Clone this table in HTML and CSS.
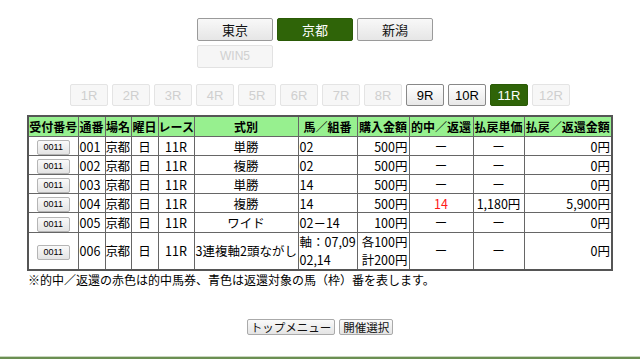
FILE: index.html
```html
<!DOCTYPE html>
<html lang="ja">
<head>
<meta charset="utf-8">
<link rel="stylesheet" href="styles.css">
</head>
<body>
<div class="page">
  <div class="venues">
    <button class="vbtn">東京</button>
    <button class="vbtn active">京都</button>
    <button class="vbtn">新潟</button>
    <button class="vbtn disabled">WIN5</button>
  </div>
  <div class="races">
    <button class="rbtn disabled">1R</button>
    <button class="rbtn disabled">2R</button>
    <button class="rbtn disabled">3R</button>
    <button class="rbtn disabled">4R</button>
    <button class="rbtn disabled">5R</button>
    <button class="rbtn disabled">6R</button>
    <button class="rbtn disabled">7R</button>
    <button class="rbtn disabled">8R</button>
    <button class="rbtn">9R</button>
    <button class="rbtn">10R</button>
    <button class="rbtn active">11R</button>
    <button class="rbtn disabled">12R</button>
  </div>
  <table class="result">
    <colgroup>
      <col class="c1"><col class="c2"><col class="c3"><col class="c4"><col class="c5"><col class="c6"><col class="c7"><col class="c8"><col class="c9"><col class="c10"><col class="c11">
    </colgroup>
    <thead>
      <tr>
        <th>受付番号</th><th>通番</th><th>場名</th><th>曜日</th><th>レース</th><th>式別</th><th>馬／組番</th><th>購入金額</th><th>的中／返還</th><th>払戻単価</th><th>払戻／返還金額</th>
      </tr>
    </thead>
    <tbody>
      <tr>
        <td class="ctr"><span class="rcpt">0011</span></td><td>001</td><td>京都</td><td class="ctr">日</td><td class="ctr">11R</td><td class="ctr">単勝</td><td>02</td><td class="rt">500円</td><td class="ctr">ー</td><td class="ctr">ー</td><td class="rt">0円</td>
      </tr>
      <tr>
        <td class="ctr"><span class="rcpt">0011</span></td><td>002</td><td>京都</td><td class="ctr">日</td><td class="ctr">11R</td><td class="ctr">複勝</td><td>02</td><td class="rt">500円</td><td class="ctr">ー</td><td class="ctr">ー</td><td class="rt">0円</td>
      </tr>
      <tr>
        <td class="ctr"><span class="rcpt">0011</span></td><td>003</td><td>京都</td><td class="ctr">日</td><td class="ctr">11R</td><td class="ctr">単勝</td><td>14</td><td class="rt">500円</td><td class="ctr">ー</td><td class="ctr">ー</td><td class="rt">0円</td>
      </tr>
      <tr>
        <td class="ctr"><span class="rcpt">0011</span></td><td>004</td><td>京都</td><td class="ctr">日</td><td class="ctr">11R</td><td class="ctr">複勝</td><td>14</td><td class="rt">500円</td><td class="ctr hit">14</td><td class="ctr">1,180円</td><td class="rt">5,900円</td>
      </tr>
      <tr>
        <td class="ctr"><span class="rcpt">0011</span></td><td>005</td><td>京都</td><td class="ctr">日</td><td class="ctr">11R</td><td class="ctr">ワイド</td><td>02－14</td><td class="rt">100円</td><td class="ctr">ー</td><td class="ctr">ー</td><td class="rt">0円</td>
      </tr>
      <tr class="tall">
        <td class="ctr"><span class="rcpt">0011</span></td><td>006</td><td>京都</td><td class="ctr">日</td><td class="ctr">11R</td><td class="ctr">3連複軸2頭ながし</td><td>軸：07,09<br>02,14</td><td class="rt">各100円<br>計200円</td><td class="ctr">ー</td><td class="ctr">ー</td><td class="rt">0円</td>
      </tr>
    </tbody>
  </table>
  <p class="note">※的中／返還の赤色は的中馬券、青色は返還対象の馬（枠）番を表します。</p>
  <div class="bottom">
    <button class="bbtn">トップメニュー</button>
    <button class="bbtn">開催選択</button>
  </div>
</div>
<div class="footer-line"></div>
</body>
</html>
```
FILE: styles.css
```css
html, body {
  margin: 0;
  padding: 0;
  background: #ffffff;
}
body {
  font-family: "Noto Sans CJK JP", "Noto Sans", sans-serif;
  color: #000;
  font-size: 12px;
  width: 640px;
  height: 360px;
  overflow: hidden;
  position: relative;
}
.page {
  padding-top: 18px;
}
button {
  font-family: "Noto Sans CJK JP", "Noto Sans", sans-serif;
  margin: 0;
  cursor: pointer;
}
.venues {
  width: 246px;
  margin: 0 auto;
  display: flex;
  flex-wrap: wrap;
  gap: 4px 4px;
}
.vbtn {
  width: 76px;
  height: 23px;
  padding: 0;
  font-size: 13px;
  line-height: 21px;
  border: 1px solid #9a9a9a;
  border-radius: 2px;
  background: linear-gradient(#f8f8f8, #e6e6e6);
  color: #111;
}
.vbtn.active {
  background: #2f6408;
  border-color: #2a5a06;
  color: #ffffff;
}
.vbtn.disabled {
  background: #f6f6f6;
  border-color: #e2e2e2;
  color: #d0d0d0;
  font-family: "Liberation Sans", Arial, sans-serif;
  font-size: 12px;
}
.races {
  margin: 16px auto 0;
  display: flex;
  justify-content: center;
  gap: 4px;
}
.rbtn {
  width: 38px;
  height: 22px;
  padding: 0;
  font-family: "Liberation Sans", Arial, sans-serif;
  font-size: 13px;
  border: 1px solid #888;
  border-radius: 2px;
  background: linear-gradient(#ffffff, #e8e8e8);
  color: #000;
}
.rbtn.disabled {
  background: #f7f7f7;
  border-color: #e4e4e4;
  color: #cfcfcf;
}
.rbtn.active {
  background: #2f6408;
  border-color: #2a5a06;
  color: #fff;
}
.result {
  margin: 9px auto 0;
  border-collapse: collapse;
  border: 2px solid #555;
  table-layout: fixed;
  width: 584px;
}
.c1 { width: 50px; }
.c2 { width: 27px; }
.c3 { width: 26px; }
.c4 { width: 27px; }
.c5 { width: 36px; }
.c6 { width: 104px; }
.c7 { width: 59px; }
.c8 { width: 52px; }
.c9 { width: 64px; }
.c10 { width: 51px; }
.c11 { width: 88px; }
.result th {
  background: #97f08f;
  font-weight: bold;
  font-size: 12px;
  height: 19px;
  padding: 0;
  line-height: 18px;
  border: 1px solid #666;
  white-space: nowrap;
  overflow: hidden;
}
.result td {
  border: 1px solid #666;
  height: 18px;
  padding: 0 1px;
  line-height: 17px;
  font-size: 12.5px;
  white-space: nowrap;
  overflow: hidden;
}
.result td:nth-child(3) {
  padding: 0;
  letter-spacing: -0.5px;
}
.result tr.tall td {
  height: 36px;
  line-height: 18px;
}
.result td.ctr { text-align: center; }
.result td.rt { text-align: right; }
.result td.hit { color: #ff1a1a; }
.rcpt {
  display: inline-block;
  width: 31px;
  height: 13px;
  line-height: 13px;
  font-family: "Liberation Sans", Arial, sans-serif;
  font-size: 9px;
  border: 1px solid #b5b5b5;
  border-radius: 2px;
  background: linear-gradient(#fafafa, #e4e4e4);
  vertical-align: middle;
}
.note {
  margin: 0 0 0 28px;
  font-size: 12px;
  line-height: 17px;
}
.bottom {
  margin-top: 31px;
  display: flex;
  justify-content: center;
  gap: 4px;
}
.bbtn {
  height: 16px;
  padding: 0 3px;
  font-size: 11.5px;
  line-height: 14px;
  border: 1px solid #aaa;
  border-radius: 2px;
  background: linear-gradient(#fafafa, #e4e4e4);
  color: #111;
}
.footer-line {
  position: absolute;
  left: 0;
  right: 0;
  top: 356px;
  height: 2px;
  background: #6b8f52;
  border-top: 1px solid #c9d8bf;
}
```
